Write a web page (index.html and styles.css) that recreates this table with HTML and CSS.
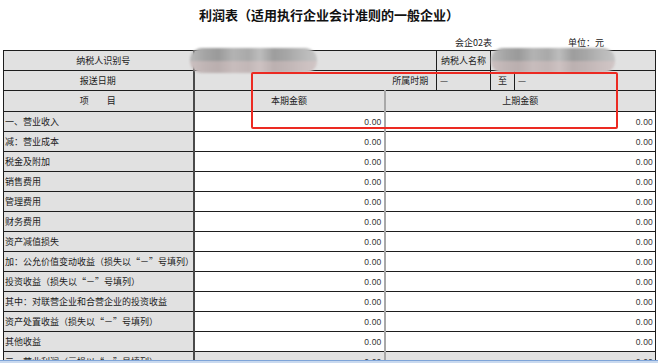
FILE: index.html
```html
<!DOCTYPE html>
<html lang="zh-CN">
<head>
<meta charset="utf-8">
<title>利润表</title>
<link rel="stylesheet" href="styles.css">
</head>
<body>
<div class="page">
  <h1 class="title">利润表（适用执行企业会计准则的一般企业）</h1>
  <div class="meta"><span class="meta-form">会企02表</span><span class="meta-unit">单位：元</span></div>
  <table class="sheet">
    <colgroup>
      <col class="c1"><col class="c2"><col class="c3"><col class="c4"><col class="c5"><col class="c6">
    </colgroup>
    <tr class="hrow">
      <td class="lbl center id-label">纳税人识别号</td>
      <td colspan="2"></td>
      <td class="center">纳税人名称</td>
      <td colspan="2"></td>
    </tr>
    <tr class="hrow">
      <td class="lbl center">报送日期</td>
      <td class="open-right"></td>
      <td class="center open-left">所属时期</td>
      <td class="dash">—</td>
      <td class="center">至</td>
      <td class="dash">—</td>
    </tr>
    <tr class="hrow hrow-last">
      <td class="lbl center">项　　目</td>
      <td class="center split">本期金额</td>
      <td colspan="4" class="center">上期金额</td>
    </tr>
    <tr><td class="lbl">一、营业收入</td><td class="num split">0.00</td><td colspan="4" class="num">0.00</td></tr>
    <tr><td class="lbl">减：营业成本</td><td class="num split">0.00</td><td colspan="4" class="num">0.00</td></tr>
    <tr><td class="lbl">税金及附加</td><td class="num split">0.00</td><td colspan="4" class="num">0.00</td></tr>
    <tr><td class="lbl">销售费用</td><td class="num split">0.00</td><td colspan="4" class="num">0.00</td></tr>
    <tr><td class="lbl">管理费用</td><td class="num split">0.00</td><td colspan="4" class="num">0.00</td></tr>
    <tr><td class="lbl">财务费用</td><td class="num split">0.00</td><td colspan="4" class="num">0.00</td></tr>
    <tr><td class="lbl">资产减值损失</td><td class="num split">0.00</td><td colspan="4" class="num">0.00</td></tr>
    <tr><td class="lbl">加：公允价值变动收益（损失以“－”号填列）</td><td class="num split">0.00</td><td colspan="4" class="num">0.00</td></tr>
    <tr><td class="lbl">投资收益（损失以“－”号填列）</td><td class="num split">0.00</td><td colspan="4" class="num">0.00</td></tr>
    <tr><td class="lbl">其中：对联营企业和合营企业的投资收益</td><td class="num split">0.00</td><td colspan="4" class="num">0.00</td></tr>
    <tr><td class="lbl">资产处置收益（损失以“－”号填列）</td><td class="num split">0.00</td><td colspan="4" class="num">0.00</td></tr>
    <tr><td class="lbl">其他收益</td><td class="num split">0.00</td><td colspan="4" class="num">0.00</td></tr>
    <tr class="total"><td class="lbl">二、营业利润（亏损以“－”号填列）</td><td class="num split">0.00</td><td colspan="4" class="num">0.00</td></tr>
    <tr><td class="lbl">加：营业外收入</td><td class="num split">0.00</td><td colspan="4" class="num">0.00</td></tr>
  </table>
  <div class="blur blur-a"></div>
  <div class="blur blur-b"></div>
  <div class="mark"></div>
  <div class="strip"></div>
</div>
</body>
</html>
```

FILE: styles.css
```css
html, body {
  margin: 0;
  padding: 0;
  overflow: hidden;
  background: #ffffff;
}

.page {
  position: relative;
  width: 658px;
  height: 363px;
  overflow: hidden;
  font-family: "Noto Sans CJK SC", "Liberation Sans", sans-serif;
  color: #1c1c1c;
}

.title {
  margin: 0;
  padding-top: 7px;
  height: 16px;
  line-height: 16px;
  font-size: 13px;
  font-weight: bold;
  text-align: center;
  color: #111;
}

.meta {
  display: flex;
  justify-content: flex-end;
  gap: 76px;
  margin-top: 14px;
  height: 11px;
  line-height: 11px;
  padding-right: 54px;
  font-size: 9px;
  color: #222;
}

.sheet {
  margin: 2px 0 0 3px;
  width: 652px;
  table-layout: fixed;
  border-collapse: collapse;
  font-size: 9px;
}

.c1 { width: 190px; }
.c2 { width: 191px; }
.c3 { width: 52px; }
.c4 { width: 54px; }
.c5 { width: 24px; }
.c6 { width: 141px; }

.sheet td {
  height: 19px;
  padding: 0 2px;
  border: 1px solid #1e1e1e;
  white-space: nowrap;
  overflow: hidden;
  line-height: 12px;
  background: #ffffff;
}

.sheet .hrow td {
  background: #e1e1e1;
}

.sheet .hrow-last td {
  height: 20px;
}

.sheet td.lbl {
  background: #e1e1e1;
  border-right: 2px solid #4a4a4a;
  padding-left: 1px;
}

.sheet td.center {
  text-align: center;
}

.sheet td.id-label {
  padding-left: 12px;
}

.sheet td.open-right {
  border-right-style: hidden;
}

.sheet td.dash {
  padding-left: 3px;
  color: #333;
}

.sheet td.split {
  border-right: 2px solid #a8a8a8;
}

.sheet td.num {
  text-align: right;
  padding-right: 2px;
  font-family: "Liberation Sans", sans-serif;
  font-size: 8.5px;
  letter-spacing: 0.2px;
  color: #333;
}

.sheet tr.total td {
  background: #e1e1e1;
}

.blur {
  position: absolute;
  top: 48px;
  height: 25px;
  border-radius: 12px;
  filter: blur(1.2px);
  background:
    linear-gradient(180deg, rgba(255,255,255,0) 0%, rgba(255,255,255,0) 50%, rgba(225,200,200,0.45) 52%, rgba(225,200,200,0.45) 100%),
    linear-gradient(90deg, #b9b9b9 0%, #a4a4a4 12%, #9a9a9a 22%, #b3b3b3 34%, #a9a9a9 46%, #bdbdbd 55%, #9d9d9d 66%, #a6a6a6 76%, #b7b7b7 88%, #c4c4c4 100%);
}

.blur-a {
  left: 190px;
  width: 127px;
}

.blur-b {
  left: 491px;
  width: 124px;
}

.mark {
  position: absolute;
  left: 251px;
  top: 72px;
  width: 363px;
  height: 53px;
  border: 2px solid #ec2a22;
  border-radius: 2px;
}

.strip {
  position: absolute;
  left: 0;
  right: 0;
  bottom: 0;
  height: 2px;
  background: #c9d9ef;
  border-top: 1px solid #7ea4d8;
}
```
